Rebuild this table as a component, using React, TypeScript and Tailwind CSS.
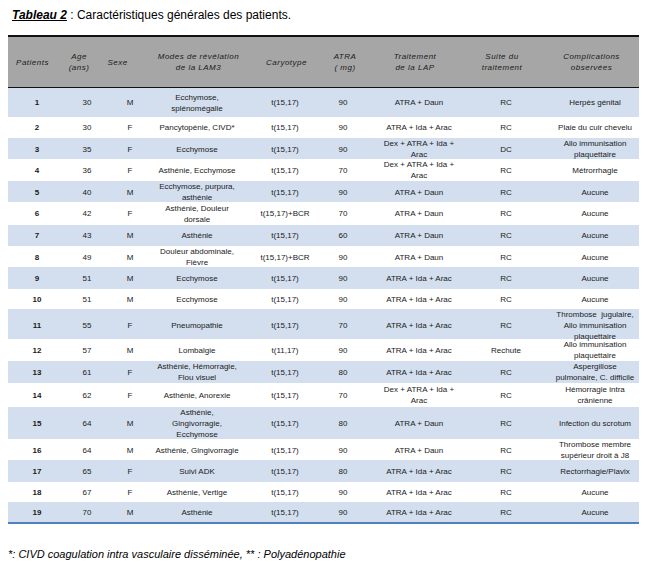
import React from "react";

type Row = {
  n: string;
  age: string;
  sexe: string;
  modes: string[];
  caryo: string;
  atra: string;
  trait: string[];
  suite: string;
  comp: string[];
  h: number;
};

const rows: Row[] = [
  { n: "1", age: "30", sexe: "M", modes: ["Ecchymose,", "splénomégalie"], caryo: "t(15,17)", atra: "90", trait: ["ATRA + Daun"], suite: "RC", comp: ["Herpès génital"], h: 29 },
  { n: "2", age: "30", sexe: "F", modes: ["Pancytopénie, CIVD*"], caryo: "t(15,17)", atra: "90", trait: ["ATRA + Ida + Arac"], suite: "RC", comp: ["Plaie du cuir chevelu"], h: 21 },
  { n: "3", age: "35", sexe: "F", modes: ["Ecchymose"], caryo: "t(15,17)", atra: "90", trait: ["Dex + ATRA + Ida +", "Arac"], suite: "DC", comp: ["Allo immunisation", "plaquettaire"], h: 21 },
  { n: "4", age: "36", sexe: "F", modes: ["Asthénie, Ecchymose"], caryo: "t(15,17)", atra: "70", trait: ["Dex + ATRA + Ida +", "Arac"], suite: "RC", comp: ["Métrorrhagie"], h: 22 },
  { n: "5", age: "40", sexe: "M", modes: ["Ecchymose, purpura,", "asthénie"], caryo: "t(15,17)", atra: "90", trait: ["ATRA + Daun"], suite: "RC", comp: ["Aucune"], h: 21 },
  { n: "6", age: "42", sexe: "F", modes: ["Asthénie, Douleur", "dorsale"], caryo: "t(15,17)+BCR", atra: "70", trait: ["ATRA + Daun"], suite: "RC", comp: ["Aucune"], h: 23 },
  { n: "7", age: "43", sexe: "M", modes: ["Asthénie"], caryo: "t(15,17)", atra: "60", trait: ["ATRA + Daun"], suite: "RC", comp: ["Aucune"], h: 21 },
  { n: "8", age: "49", sexe: "M", modes: ["Douleur abdominale,", "Fièvre"], caryo: "t(15,17)+BCR", atra: "90", trait: ["ATRA + Daun"], suite: "RC", comp: ["Aucune"], h: 21 },
  { n: "9", age: "51", sexe: "M", modes: ["Ecchymose"], caryo: "t(15,17)", atra: "90", trait: ["ATRA + Ida + Arac"], suite: "RC", comp: ["Aucune"], h: 22 },
  { n: "10", age: "51", sexe: "M", modes: ["Ecchymose"], caryo: "t(15,17)", atra: "90", trait: ["ATRA + Ida + Arac"], suite: "RC", comp: ["Aucune"], h: 20 },
  { n: "11", age: "55", sexe: "F", modes: ["Pneumopathie"], caryo: "t(15,17)", atra: "70", trait: ["ATRA + Ida + Arac"], suite: "RC", comp: ["Thrombose  jugulaire,", "Allo immunisation", "plaquettaire"], h: 30 },
  { n: "12", age: "57", sexe: "M", modes: ["Lombalgie"], caryo: "t(11,17)", atra: "90", trait: ["ATRA + Ida + Arac"], suite: "Rechute", comp: ["Allo immunisation", "plaquettaire"], h: 22 },
  { n: "13", age: "61", sexe: "F", modes: ["Asthénie, Hémorragie,", "Flou visuel"], caryo: "t(15,17)", atra: "80", trait: ["ATRA + Ida + Arac"], suite: "RC", comp: ["Aspergillose", "pulmonaire, C. difficile"], h: 22 },
  { n: "14", age: "62", sexe: "F", modes: ["Asthénie, Anorexie"], caryo: "t(15,17)", atra: "70", trait: ["Dex + ATRA + Ida +", "Arac"], suite: "RC", comp: ["Hémorragie intra", "crânienne"], h: 24 },
  { n: "15", age: "64", sexe: "M", modes: ["Asthénie,", "Gingivorragie,", "Ecchymose"], caryo: "t(15,17)", atra: "80", trait: ["ATRA + Daun"], suite: "RC", comp: ["Infection du scrotum"], h: 32 },
  { n: "16", age: "64", sexe: "M", modes: ["Asthénie, Gingivorragie"], caryo: "t(15,17)", atra: "90", trait: ["ATRA + Daun"], suite: "RC", comp: ["Thrombose membre", "supérieur droit à J8"], h: 21 },
  { n: "17", age: "65", sexe: "F", modes: ["Suivi ADK"], caryo: "t(15,17)", atra: "80", trait: ["ATRA + Ida + Arac"], suite: "RC", comp: ["Rectorrhagie/Plavix"], h: 22 },
  { n: "18", age: "67", sexe: "F", modes: ["Asthénie, Vertige"], caryo: "t(15,17)", atra: "90", trait: ["ATRA + Ida + Arac"], suite: "RC", comp: ["Aucune"], h: 20 },
  { n: "19", age: "70", sexe: "M", modes: ["Asthénie"], caryo: "t(15,17)", atra: "90", trait: ["ATRA + Ida + Arac"], suite: "RC", comp: ["Aucune"], h: 20 },
];

const grid = "grid grid-cols-[58px_42px_44px_90px_86px_30px_122px_52px_107px]";

function Lines({ lines }: { lines: string[] }) {
  return (
    <>
      {lines.map((l, i) => (
        <div key={i} className="whitespace-pre">
          {l}
        </div>
      ))}
    </>
  );
}

function Cell({ children, className = "" }: { children: React.ReactNode; className?: string }) {
  return (
    <div className={"flex flex-col items-center justify-center text-center " + className}>{children}</div>
  );
}

export default function App() {
  return (
    <div
      className="w-[647px] h-[570px] bg-white text-[#1a1a1a] px-[8px] pt-[7px]"
      style={{ fontFamily: '"Liberation Sans", Arial, sans-serif' }}
    >
      <div className="pl-[4px] text-[12px] leading-[16px] text-black">
        <span className="font-bold italic underline">Tableau 2</span> : Caractéristiques générales des patients.
      </div>

      <div className="mt-[12px] w-[631px]">
        <div className={grid + " h-[53px] bg-[#a6a6a6] border-t-2 border-b border-[#111] italic text-[8px] leading-[11px] tracking-[0.5px] text-[#1a1a1a]"}>
          <Cell className="pr-[9px]">Patients</Cell>
          <Cell className="pr-[16px]">
            <div>Age</div>
            <div>(ans)</div>
          </Cell>
          <Cell className="pr-[25px]">Sexe</Cell>
          <Cell className="pl-[3px]">
            <div className="whitespace-nowrap">Modes de révélation</div>
            <div>de la LAM3</div>
          </Cell>
          <Cell className="pl-[3px]">Caryotype</Cell>
          <Cell className="pl-[4px]">
            <div>ATRA</div>
            <div>( mg)</div>
          </Cell>
          <Cell className="pr-[8px]">
            <div>Traitement</div>
            <div>de la LAP</div>
          </Cell>
          <Cell className="pr-[8px]">
            <div className="whitespace-nowrap">Suite du</div>
            <div>traitement</div>
          </Cell>
          <Cell className="pl-[12px]">
            <div>Complications</div>
            <div>observées</div>
          </Cell>
        </div>

        {rows.map((r, i) => (
          <div
            key={r.n}
            className={grid + " text-[8px] leading-[11px] " + (i % 2 === 0 ? "bg-[#d3dfee]" : "bg-white")}
            style={{ height: r.h }}
          >
            <Cell className="font-bold">{r.n}</Cell>
            <Cell>{r.age}</Cell>
            <Cell>{r.sexe}</Cell>
            <Cell>
              <Lines lines={r.modes} />
            </Cell>
            <Cell>{r.caryo}</Cell>
            <Cell>{r.atra}</Cell>
            <Cell>
              <Lines lines={r.trait} />
            </Cell>
            <Cell>{r.suite}</Cell>
            <Cell className="pl-[19px]">
              <Lines lines={r.comp} />
            </Cell>
          </div>
        ))}
        <div className="h-[2px] bg-[#4f81bd]" />
      </div>

      <div className="mt-[24px] italic text-[11px] leading-[13px] text-black">
        *: CIVD coagulation intra vasculaire disséminée, ** : Polyadénopathie
      </div>
    </div>
  );
}
